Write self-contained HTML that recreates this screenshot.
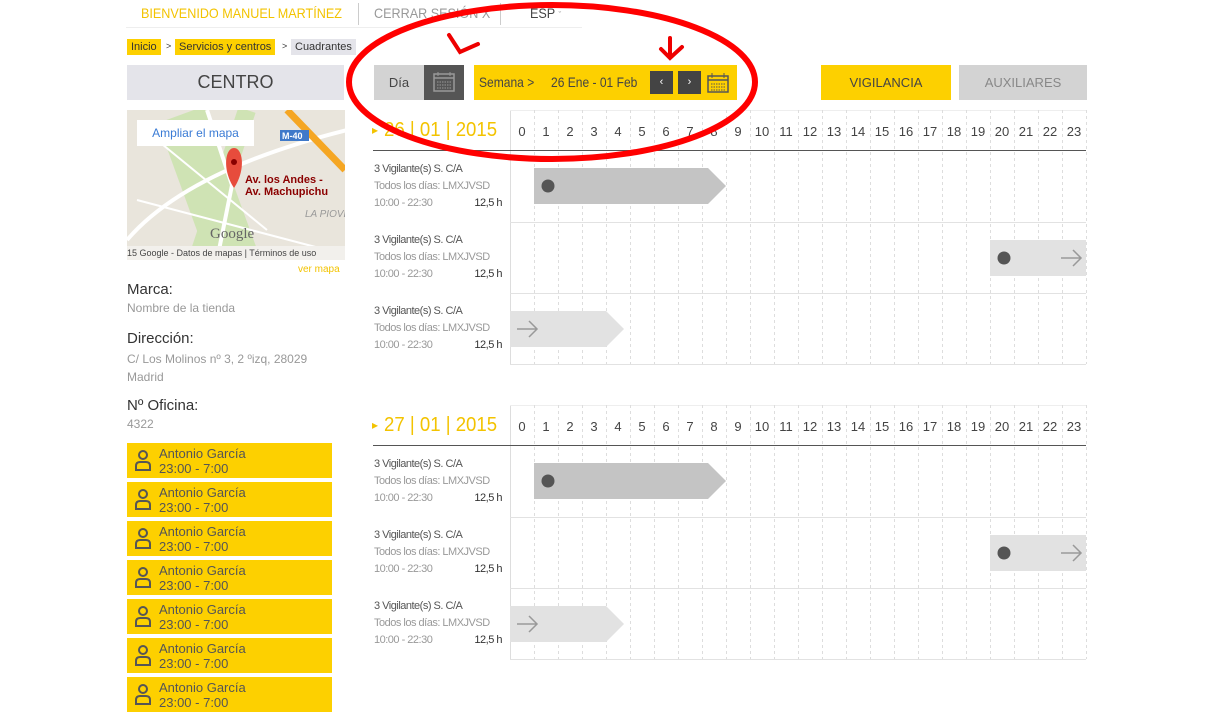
<!DOCTYPE html>
<html><head><meta charset="utf-8"><style>
*{margin:0;padding:0;box-sizing:border-box}
body{width:1222px;height:684px;overflow:hidden;background:#fff;font-family:"Liberation Sans",sans-serif;position:relative;color:#555}
.a{position:absolute}
.y{background:#fdd000}
.sx{transform-origin:0 0;transform:scaleX(0.86);white-space:nowrap}
.tb{transform-origin:0 0;transform:scaleX(0.9);white-space:nowrap}
.bc{font-size:11px;color:#333;padding:2px 4px;height:16px;line-height:12px}
.person{left:127px;width:205px;height:35px;background:#fdd000;color:#555;font-size:13px;line-height:15px;padding:3px 0 0 32px}
.person svg{position:absolute;left:6px;top:6px}
.lbl{font-size:11px;letter-spacing:-0.5px;line-height:17px}
.lbl .g{color:#999}
</style></head><body>
<div class="a tb" style="left:141px;top:5px;font-size:14px;color:#f3c300">BIENVENIDO MANUEL MARTÍNEZ</div>
<div class="a" style="left:358px;top:3px;width:1px;height:22px;background:#ccc"></div>
<div class="a tb" style="left:374px;top:5px;font-size:14px;color:#999">CERRAR SESIÓN X</div>
<div class="a" style="left:500px;top:3px;width:1px;height:22px;background:#ccc"></div>
<div class="a tb" style="left:530px;top:5px;font-size:14px;color:#444">ESP <span style="font-size:9px;color:#999">ˇ</span></div>
<div class="a" style="left:126px;top:27px;width:456px;height:1px;background:#eee"></div>
<div class="a bc y" style="left:127px;top:39px">Inicio</div>
<div class="a" style="left:166px;top:41px;font-size:9px;color:#333">&gt;</div>
<div class="a bc y" style="left:175px;top:39px">Servicios y centros</div>
<div class="a" style="left:282px;top:41px;font-size:9px;color:#333">&gt;</div>
<div class="a bc" style="left:291px;top:39px;background:#e4e4ea">Cuadrantes</div>
<div class="a" style="left:127px;top:65px;width:217px;height:35px;background:#e4e4ea;text-align:center;font-size:18px;line-height:35px;color:#444">CENTRO</div>
<div class="a" style="left:127px;top:110px;width:218px;height:150px;background:#e9e5dc;overflow:hidden">
<svg width="218" height="150">
<rect x="55" y="0" width="50" height="150" fill="#cfe3b4" transform="rotate(-20 80 75)"/>
<path d="M120 0 L70 150" stroke="#cfe3b4" stroke-width="18" fill="none"/>
<path d="M0 130 Q60 60 220 20" stroke="#fff" stroke-width="4" fill="none"/>
<path d="M80 0 L105 75 L90 150" stroke="#fff" stroke-width="4" fill="none"/>
<path d="M160 0 L218 60" stroke="#f5a623" stroke-width="7" fill="none"/>
<path d="M10 90 L200 140 M30 30 L140 120" stroke="#fff" stroke-width="2" fill="none"/>
<rect x="153" y="20" width="29" height="11" fill="#3f79c9"/><text x="155" y="29" font-size="9" fill="#fff" font-weight="bold" font-family="Liberation Sans">M-40</text>
<path d="M107 78 C95 60 98 38 107 38 C116 38 119 60 107 78Z" fill="#e74c3c"/><circle cx="107" cy="52" r="3" fill="#800"/>
<text x="118" y="73" font-size="11" fill="#8b0000" font-weight="bold" font-family="Liberation Sans">Av. los Andes -</text>
<text x="118" y="85" font-size="11" fill="#8b0000" font-weight="bold" font-family="Liberation Sans">Av. Machupichu</text>
<text x="83" y="128" font-size="15" fill="#666" font-family="Liberation Serif">Google</text>
<text x="178" y="107" font-size="10" fill="#999" font-style="italic" font-family="Liberation Sans">LA PIOVE</text>
<rect x="0" y="136" width="218" height="14" fill="#f2f0ec"/>
<text x="0" y="146" font-size="9" fill="#444" font-family="Liberation Sans">15 Google - Datos de mapas  |  Términos de uso</text>
</svg>
<div class="a" style="left:10px;top:10px;width:117px;height:26px;background:#fff;color:#3a7bd5;font-size:12px;line-height:26px;text-align:center">Ampliar el mapa</div>
</div>
<div class="a" style="left:298px;top:264px;font-size:10px;color:#f3c300">ver mapa</div>
<div class="a" style="left:127px;top:281px;font-size:15px;color:#333">Marca:</div>
<div class="a" style="left:127px;top:301px;font-size:12px;color:#999">Nombre de la tienda</div>
<div class="a" style="left:127px;top:330px;font-size:15px;color:#333">Dirección:</div>
<div class="a" style="left:127px;top:350px;font-size:12px;color:#999;line-height:18px">C/ Los Molinos nº 3, 2 ºizq, 28029<br>Madrid</div>
<div class="a" style="left:127px;top:397px;font-size:15px;color:#333">Nº Oficina:</div>
<div class="a" style="left:127px;top:417px;font-size:12px;color:#999">4322</div>
<div id="people"></div>
<div class="a" style="left:374px;top:65px;width:50px;height:35px;background:#d3d3d3;font-size:13px;line-height:35px;text-align:center;color:#444">Día</div>
<div class="a" style="left:424px;top:65px;width:40px;height:35px;background:#555">
<svg width="40" height="35"><rect x="10" y="9" width="20" height="17" fill="none" stroke="#999" stroke-width="1.5"/><line x1="10" y1="13" x2="30" y2="13" stroke="#999" stroke-width="1.5"/><line x1="14" y1="7" x2="14" y2="11" stroke="#999"/><line x1="26" y1="7" x2="26" y2="11" stroke="#999"/><path d="M13 17h14M13 20h14M13 23h14" stroke="#999" stroke-dasharray="1.5 1"/></svg></div>
<div class="a y" style="left:474px;top:65px;width:263px;height:35px"></div>
<div class="a sx" style="left:479px;top:74px;font-size:14px;color:#444">Semana &gt;</div>
<div class="a sx" style="left:551px;top:74px;font-size:14px;color:#444">26 Ene - 01 Feb</div>
<div class="a" style="left:650px;top:71px;width:23px;height:23px;background:#444;color:#fff;font-size:11px;text-align:center;line-height:23px">‹</div>
<div class="a" style="left:678px;top:71px;width:23px;height:23px;background:#444;color:#fff;font-size:11px;text-align:center;line-height:23px">›</div>
<div class="a" style="left:706px;top:71px"><svg width="24" height="23"><rect x="2" y="5" width="20" height="16" fill="none" stroke="#555" stroke-width="1.5"/><line x1="2" y1="9" x2="22" y2="9" stroke="#555" stroke-width="1.5"/><line x1="6" y1="2" x2="6" y2="7" stroke="#555"/><line x1="18" y1="2" x2="18" y2="7" stroke="#555"/><path d="M5 13h14M5 16h14M5 19h14" stroke="#555" stroke-dasharray="1.5 1"/></svg></div>
<div class="a y" style="left:821px;top:65px;width:130px;height:35px;font-size:13px;line-height:35px;text-align:center;color:#444">VIGILANCIA</div>
<div class="a" style="left:959px;top:65px;width:128px;height:35px;background:#d3d3d3;font-size:13px;line-height:35px;text-align:center;color:#888">AUXILIARES</div>
<div id="grid"></div>
<svg class="a" style="left:0;top:0" width="1222" height="684">
<ellipse cx="552" cy="82" rx="203" ry="77" fill="none" stroke="#f00" stroke-width="6"/>
<path d="M449 35 L460 52 L478 44" fill="none" stroke="#e00" stroke-width="4" stroke-linecap="round"/>
<path d="M670 38 L670 56 M661 49 L670 58 L682 47" fill="none" stroke="#e00" stroke-width="4" stroke-linecap="round"/>
</svg>
<script>
var p='';
for(var i=0;i<7;i++){p+='<div class="a person" style="top:'+(443+39*i)+'px"><svg width="20" height="24"><circle cx="10" cy="6" r="4" fill="none" stroke="#555" stroke-width="2"/><path d="M3 21 V17 Q3 13 7 13 H13 Q17 13 17 17 V21Z" fill="none" stroke="#555" stroke-width="2"/></svg>Antonio García<br>23:00 - 7:00</div>';}
document.getElementById('people').innerHTML=p;
var g='';
function sec(top,date){
 g+='<div class="a" style="left:372px;top:'+(top+13)+'px;font-size:12px;color:#f3c300">▸</div>';
 g+='<div class="a" style="left:384px;top:'+(top+9)+'px;font-size:20px;color:#f3c300;white-space:nowrap;transform-origin:0 0;transform:scaleX(0.93)">'+date+'</div>';
 var s='<svg class="a" style="left:373px;top:'+top+'px" width="720" height="256">';
 s+='<line x1="137.5" y1="0" x2="137.5" y2="254" stroke="#ddd"/><line x1="137" y1="0.5" x2="713" y2="0.5" stroke="#eee"/>';
 for(var h=1;h<=24;h++){var x=137.5+24*h;s+='<line x1="'+x+'" y1="0" x2="'+x+'" y2="254" stroke="#ddd" stroke-dasharray="3 3"/>';}
 for(var h=0;h<24;h++){s+='<text x="'+(149+24*h)+'" y="26" font-size="13" text-anchor="middle" fill="#444" font-family="Liberation Sans">'+h+'</text>';}
 s+='<line x1="0" y1="40.5" x2="713" y2="40.5" stroke="#555"/>';
 s+='<line x1="137" y1="112.5" x2="713" y2="112.5" stroke="#e2e2e2"/><line x1="137" y1="183.5" x2="713" y2="183.5" stroke="#e2e2e2"/><line x1="137" y1="254.5" x2="713" y2="254.5" stroke="#e2e2e2"/>';
 s+='<path d="M161 58 H335 L353 76 L335 94 H161Z" fill="#c4c4c4"/><circle cx="175" cy="76" r="6.5" fill="#555"/>';
 s+='<rect x="617" y="130" width="96" height="36" fill="#e2e2e2"/><circle cx="631" cy="148" r="6.5" fill="#555"/><path d="M688 148h20M700 140l8 8-8 8" stroke="#999" stroke-width="1.5" fill="none"/>';
 s+='<path d="M137 201 H233 L251 219 L233 237 H137Z" fill="#e2e2e2"/><path d="M144 219h20M156 211l8 8-8 8" stroke="#999" stroke-width="1.5" fill="none"/>';
 s+='</svg>';g+=s;
 for(var r=0;r<3;r++){var t=top+51+71*r;
  g+='<div class="a lbl" style="left:374px;top:'+t+'px;width:128px">3 Vigilante(s) S. C/A<br><span class="g">Todos los días: LMXJVSD</span><br><span class="g">10:00 - 22:30</span><span style="float:right;color:#333">12,5 h</span></div>';}
}
sec(110,'26 | 01 | 2015');sec(405,'27 | 01 | 2015');
document.getElementById('grid').innerHTML=g;
</script>
</body></html>
